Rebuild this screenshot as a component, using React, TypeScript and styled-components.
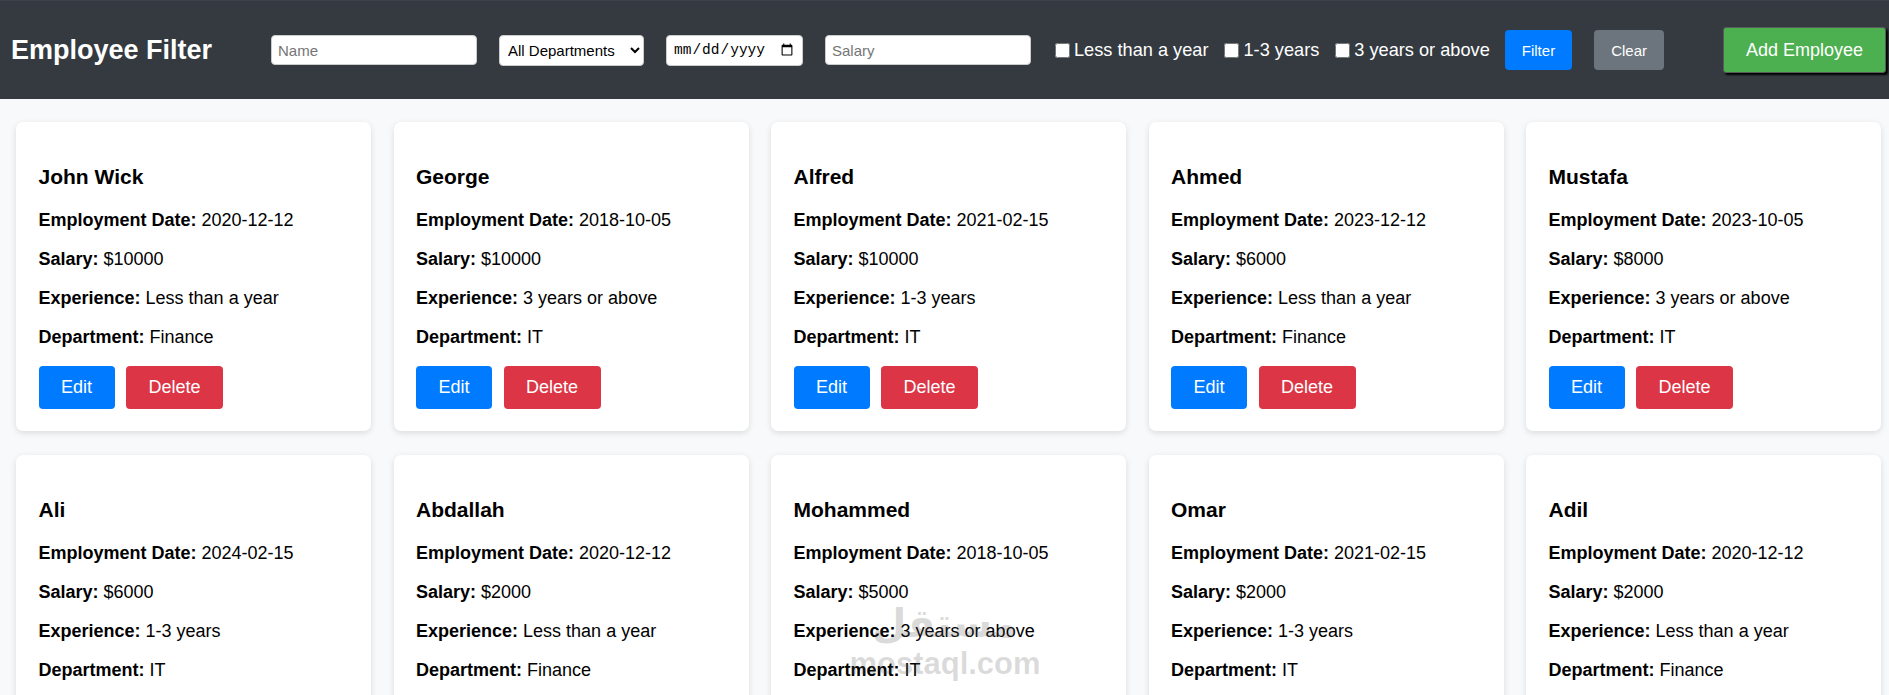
import React from "react";
import styled, { createGlobalStyle } from "styled-components";

interface Employee {
    name: string;
    date: string;
    salary: number;
    experience: string;
    department: string;
}

const employees: Employee[] = [
    { name: "John Wick", date: "2020-12-12", salary: 10000, experience: "Less than a year", department: "Finance" },
    { name: "George", date: "2018-10-05", salary: 10000, experience: "3 years or above", department: "IT" },
    { name: "Alfred", date: "2021-02-15", salary: 10000, experience: "1-3 years", department: "IT" },
    { name: "Ahmed", date: "2023-12-12", salary: 6000, experience: "Less than a year", department: "Finance" },
    { name: "Mustafa", date: "2023-10-05", salary: 8000, experience: "3 years or above", department: "IT" },
    { name: "Ali", date: "2024-02-15", salary: 6000, experience: "1-3 years", department: "IT" },
    { name: "Abdallah", date: "2020-12-12", salary: 2000, experience: "Less than a year", department: "Finance" },
    { name: "Mohammed", date: "2018-10-05", salary: 5000, experience: "3 years or above", department: "IT" },
    { name: "Omar", date: "2021-02-15", salary: 2000, experience: "1-3 years", department: "IT" },
    { name: "Adil", date: "2020-12-12", salary: 2000, experience: "Less than a year", department: "Finance" },
];

const experienceOptions = ["Less than a year", "1-3 years", "3 years or above"];

const App: React.FC = () => {
    return (
        <>
            <GlobalStyle />
            <Header>
                <Title>Employee Filter</Title>
                <Filters>
                    <TextInput type="text" placeholder="Name" />
                    <Select defaultValue="">
                        <option value="">All Departments</option>
                        <option value="IT">IT</option>
                        <option value="Finance">Finance</option>
                    </Select>
                    <DateInput type="date" />
                    <TextInput type="number" placeholder="Salary" />
                    <CheckGroup>
                        {experienceOptions.map((opt) => (
                            <CheckLabel key={opt}>
                                <Checkbox type="checkbox" />
                                {opt}
                            </CheckLabel>
                        ))}
                    </CheckGroup>
                    <SmallButton variant="#007bff">Filter</SmallButton>
                    <SmallButton variant="#6c757d">Clear</SmallButton>
                </Filters>
                <AddButton>Add Employee</AddButton>
            </Header>
            <Grid>
                {employees.map((emp) => (
                    <Card key={emp.name}>
                        <Name>{emp.name}</Name>
                        <Field>
                            <strong>Employment Date:</strong> {emp.date}
                        </Field>
                        <Field>
                            <strong>Salary:</strong> ${emp.salary}
                        </Field>
                        <Field>
                            <strong>Experience:</strong> {emp.experience}
                        </Field>
                        <Field>
                            <strong>Department:</strong> {emp.department}
                        </Field>
                        <Actions>
                            <CardButton variant="#007bff">Edit</CardButton>
                            <CardButton variant="#dc3545">Delete</CardButton>
                        </Actions>
                    </Card>
                ))}
            </Grid>
            <Watermark>
                <WatermarkLogo>مستقل</WatermarkLogo>
                <WatermarkText>mostaql.com</WatermarkText>
            </Watermark>
        </>
    );
};

export default App;

const GlobalStyle = createGlobalStyle`
    html, body {
        margin: 0;
        padding: 0;
        overflow: hidden;
        background: #f8f9fa;
        font-family: "Liberation Sans", Arial, sans-serif;
    }
`;

const Header = styled.header`
    display: flex;
    align-items: center;
    justify-content: space-between;
    height: 99px;
    padding: 0 3px 0 11px;
    box-sizing: border-box;
    background: #343a40;
    border-top: 1px solid #3d434a;
`;

const Title = styled.h1`
    margin: 0;
    color: #fff;
    font-size: 27px;
    font-weight: bold;
`;

const Filters = styled.div`
    display: flex;
    align-items: center;
    gap: 22px;
`;

const TextInput = styled.input`
    width: 206px;
    height: 30px;
    box-sizing: border-box;
    padding: 5px 6px;
    border: 1px solid #ccc;
    border-radius: 4px;
    font-family: "Liberation Sans", Arial, sans-serif;
    font-size: 15px;
    color: #000;
    background: #fff;
    outline: none;

    &::placeholder {
        color: #757575;
    }

    &::-webkit-outer-spin-button,
    &::-webkit-inner-spin-button {
        -webkit-appearance: none;
        margin: 0;
    }
`;

const Select = styled.select`
    width: 145px;
    height: 31px;
    box-sizing: border-box;
    padding: 4px 4px;
    border: 1px solid #ccc;
    border-radius: 4px;
    font-family: "Liberation Sans", Arial, sans-serif;
    font-size: 15px;
    color: #000;
    background: #fff;
`;

const DateInput = styled.input`
    width: 137px;
    height: 31px;
    box-sizing: border-box;
    padding: 4px 6px;
    border: 1px solid #ccc;
    border-radius: 4px;
    font-family: "Liberation Mono", monospace;
    font-size: 14.5px;
    color: #000;
    background: #fff;
`;

const CheckGroup = styled.div`
    display: flex;
    align-items: center;
    gap: 16px;
    margin: 0 -7px 0 2px;
`;

const CheckLabel = styled.label`
    display: flex;
    align-items: center;
    gap: 4px;
    color: #fff;
    font-size: 18.2px;
`;

const Checkbox = styled.input`
    width: 15px;
    height: 15px;
    margin: 0;
`;

const SmallButton = styled.button<{ variant: string }>`
    height: 40px;
    padding: 0 17px;
    border: none;
    border-radius: 4px;
    background: ${({ variant }) => variant};
    color: #fff;
    font-family: "Liberation Sans", Arial, sans-serif;
    font-size: 15px;
    cursor: pointer;
`;

const AddButton = styled.button`
    height: 46px;
    padding: 0 22px;
    border: 1px solid #5a5a5a;
    border-radius: 3px;
    box-shadow: 2px 2px 2px #000;
    background: #4caf50;
    color: #fff;
    font-family: "Liberation Sans", Arial, sans-serif;
    font-size: 18px;
    cursor: pointer;
`;

const Grid = styled.main`
    display: grid;
    grid-template-columns: repeat(5, 1fr);
    column-gap: 22.5px;
    row-gap: 24px;
    padding: 23px 8px 0 16px;
`;

const Card = styled.div`
    background: #fff;
    border-radius: 7px;
    padding: 22.5px;
    box-shadow: 0 2px 6px rgba(0, 0, 0, 0.12);
    color: #000;
`;

const Name = styled.h3`
    margin: 20px 0 21px;
    font-size: 21px;
    font-weight: bold;
`;

const Field = styled.p`
    margin: 18px 0;
    font-size: 18px;
`;

const Actions = styled.div`
    display: flex;
    gap: 11.5px;
`;

const CardButton = styled.button<{ variant: string }>`
    padding: 11.25px 22.5px;
    border: none;
    border-radius: 4px;
    background: ${({ variant }) => variant};
    color: #fff;
    font-family: "Liberation Sans", Arial, sans-serif;
    font-size: 18px;
    line-height: 20.7px;
    cursor: pointer;
`;

const Watermark = styled.div`
    position: absolute;
    left: 852px;
    top: 598px;
    width: 186px;
    display: flex;
    flex-direction: column;
    align-items: center;
    pointer-events: none;
    color: rgba(90, 90, 90, 0.22);
`;

const WatermarkLogo = styled.div`
    font-family: "DejaVu Sans", sans-serif;
    font-size: 40px;
    font-weight: bold;
    line-height: 50px;
`;

const WatermarkText = styled.div`
    font-family: "Liberation Sans", Arial, sans-serif;
    font-size: 31px;
    font-weight: bold;
    line-height: 32px;
`;
